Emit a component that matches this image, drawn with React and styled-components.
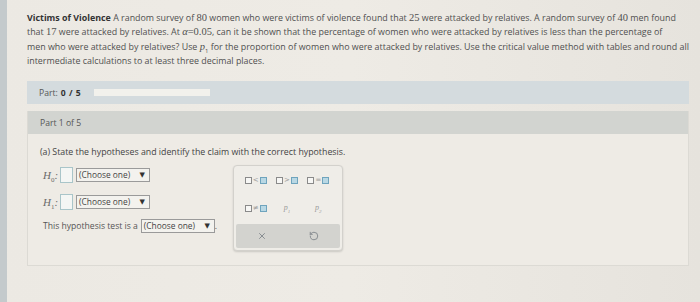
import React from 'react';
import styled, { createGlobalStyle } from 'styled-components';
import { X, RotateCcw } from 'lucide-react';

const Global = createGlobalStyle`
  html, body {
    margin: 0;
    padding: 0;
    background: #ebe8e2;
  }
  body {
    font-family: "Open Sans", "DejaVu Sans", sans-serif;
    color: #4d4d4d;
  }
`;

const Page = styled.div`
  display: flex;
  width: 700px;
  height: 302px;
  overflow: hidden;
  background: linear-gradient(90deg, #ece9e3 0%, #eeebe5 50%, #e6e3dd 100%);
`;

const SideStrip = styled.div`
  width: 7px;
  flex: none;
  background: #c4cacc;
`;

const Main = styled.main`
  flex: 1;
  padding: 11px 15px 0 20px;
`;

const Problem = styled.p`
  margin: 0;
  font-size: 8.9px;
  line-height: 14.3px;
  color: #505050;
  white-space: nowrap;

  b {
    color: #333;
    font-weight: 700;
  }

  sub {
    font-size: 6px;
    line-height: 0;
  }
`;

const Num = styled.span`
  font-family: "Liberation Serif", serif;
  font-size: 10.5px;
  line-height: 0;
  font-style: ${({ italic }) => (italic ? 'italic' : 'normal')};
`;

const PartBar = styled.div`
  margin-top: 13px;
  height: 23px;
  background: #d4dbde;
  display: flex;
  align-items: center;
  padding-left: 12px;
  font-size: 8.6px;
  color: #555;

  b {
    margin-left: 3px;
    color: #333;
    word-spacing: 1px;
  }
`;

const Progress = styled.div`
  width: 116px;
  height: 7px;
  margin-left: 13px;
  background: #f2f1ec;
`;

const Card = styled.section`
  margin-top: 7px;
  border: 1px solid #dcdad4;
  border-top: none;
`;

const CardHead = styled.div`
  height: 23px;
  background: #d2d4d0;
  display: flex;
  align-items: center;
  padding-left: 12px;
  font-size: 8.6px;
  color: #555;
`;

const CardBody = styled.div`
  height: 131px;
  background: #eeebe5;
  padding: 12px 12px 0 12px;
  box-sizing: border-box;
`;

const Question = styled.div`
  font-size: 8.8px;
  color: #444;
  line-height: 12px;
`;

const Work = styled.div`
  display: flex;
  align-items: flex-start;
  margin-top: 7px;
`;

const Fields = styled.div`
  width: 177px;
  display: flex;
  flex-direction: column;
  padding-left: 3px;
  padding-top: 2px;
`;

const Row = styled.div`
  display: flex;
  align-items: center;
  height: 15px;
  margin-bottom: ${({ gap }) => gap}px;
  font-size: 8.6px;
  color: #555;
  white-space: nowrap;
`;

const HLabel = styled.span`
  font-family: "Liberation Serif", serif;
  font-style: italic;
  font-size: 11px;
  color: #6a6a6a;
  width: 17px;

  sub {
    font-size: 7px;
    font-style: normal;
    line-height: 0;
  }
`;

const AnswerBox = styled.span`
  width: 11px;
  height: 14px;
  border: 1px solid #a9c5c9;
  background: #f4f6f4;
  margin-right: 3px;
`;

const Select = styled.span`
  display: inline-flex;
  align-items: center;
  justify-content: space-between;
  box-sizing: border-box;
  width: 74px;
  height: 14px;
  padding: 0 4px 0 2px;
  border: 1px solid #9a9a9a;
  background: #f3f2ee;
  color: #444;
  font-size: 8.4px;
  margin-left: ${({ ml }) => ml || 0}px;

  i {
    font-style: normal;
    font-size: 7px;
    color: #333;
  }
`;

const Palette = styled.div`
  margin-left: 13px;
  width: 110px;
  height: 86px;
  box-sizing: border-box;
  border: 1px solid #d3d1cc;
  border-radius: 4px;
  background: #efede8;
  box-shadow: 0 1px 2px rgba(0, 0, 0, 0.15);
  padding: 0 2px 2px;
  display: flex;
  flex-direction: column;
`;

const Symbols = styled.div`
  display: grid;
  grid-template-columns: repeat(3, 1fr);
  grid-template-rows: 28px 28px;
  align-items: center;
  justify-items: center;
  padding: 0 6px 0 4px;
`;

const Sym = styled.span`
  display: inline-flex;
  align-items: center;
  gap: 1px;
`;

const Op = styled.span`
  font-family: "DejaVu Sans", sans-serif;
  font-size: 7px;
  line-height: 7px;
  color: #999;
`;

const Sq = styled.span`
  width: 5px;
  height: 5px;
  border: 1px solid ${({ blue }) => (blue ? '#6fa4bd' : '#8a8a8a')};
  background: ${({ blue }) => (blue ? '#b9d8e4' : '#f7f7f5')};
`;

const PVar = styled.span`
  font-family: "Liberation Serif", serif;
  font-style: italic;
  font-size: 8px;
  color: #9a9a9a;

  sub {
    font-size: 5px;
  }
`;

const ButtonBar = styled.div`
  margin-top: 2px;
  flex: 1;
  display: flex;
  background: #d3d3cf;
  border-radius: 2px;
`;

const Tool = styled.button`
  flex: 1;
  border: none;
  background: transparent;
  display: flex;
  align-items: center;
  justify-content: center;
  color: #7a7f85;
  padding: 0;
`;

const App = () => {
  return (
    <>
      <Global />
      <Page>
        <SideStrip />
        <Main>
          <Problem>
            <b>Victims of Violence</b> A random survey of <Num>80</Num> women who were victims of violence found that <Num>25</Num> were attacked by relatives. A random survey of <Num>40</Num> men found
            <br />
            that <Num>17</Num> were attacked by relatives. At <Num italic>α</Num><Num>=0.05</Num>, can it be shown that the percentage of women who were attacked by relatives is less than the percentage of
            <br />
            men who were attacked by relatives? Use <Num italic>p</Num><sub>1</sub> for the proportion of women who were attacked by relatives. Use the critical value method with tables and round all
            <br />
            intermediate calculations to at least three decimal places.
          </Problem>

          <PartBar>
            Part: <b>0 / 5</b>
            <Progress />
          </PartBar>

          <Card>
            <CardHead>Part 1 of 5</CardHead>
            <CardBody>
              <Question>(a) State the hypotheses and identify the claim with the correct hypothesis.</Question>
              <Work>
                <Fields>
                  <Row gap={12}>
                    <HLabel>H<sub>0</sub>:</HLabel>
                    <AnswerBox />
                    <Select>(Choose one) <i>▼</i></Select>
                  </Row>
                  <Row gap={9}>
                    <HLabel>H<sub>1</sub>:</HLabel>
                    <AnswerBox />
                    <Select>(Choose one) <i>▼</i></Select>
                  </Row>
                  <Row gap={0}>
                    This hypothesis test is a
                    <Select ml={3}>(Choose one) <i>▼</i></Select>.
                  </Row>
                </Fields>

                <Palette>
                  <Symbols>
                    <Sym><Sq /><Op>&lt;</Op><Sq blue /></Sym>
                    <Sym><Sq /><Op>&gt;</Op><Sq blue /></Sym>
                    <Sym><Sq /><Op>=</Op><Sq blue /></Sym>
                    <Sym><Sq /><Op>≠</Op><Sq blue /></Sym>
                    <PVar>p<sub>1</sub></PVar>
                    <PVar>p<sub>2</sub></PVar>
                  </Symbols>
                  <ButtonBar>
                    <Tool><X size={10} strokeWidth={2} /></Tool>
                    <Tool><RotateCcw size={10} strokeWidth={2} /></Tool>
                  </ButtonBar>
                </Palette>
              </Work>
            </CardBody>
          </Card>
        </Main>
      </Page>
    </>
  );
};

export default App;
